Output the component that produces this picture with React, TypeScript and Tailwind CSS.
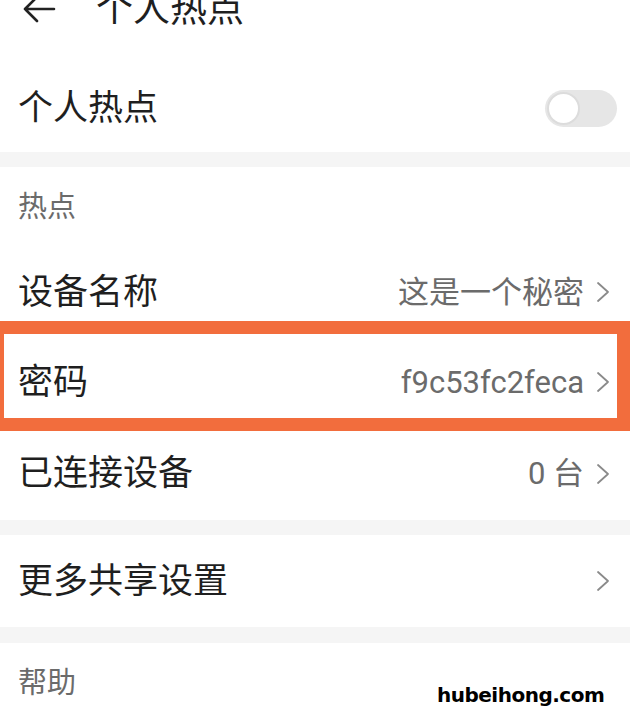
import React from 'react';

const Chevron = () => (
  <svg width="14" height="22" viewBox="0 0 14 22" className="ml-[12px] shrink-0">
    <path d="M2 2 L12 11 L2 20" fill="none" stroke="#8a8a8a" strokeWidth="1.8" strokeLinecap="round" strokeLinejoin="round" />
  </svg>
);

const Row = ({ label, value, h }: { label: string; value?: string; h: string }) => (
  <div className={`flex items-center justify-between pl-[18px] pr-[20px] bg-white ${h}`}>
    <span className="text-[35px] text-[#1f1f1f] leading-none">{label}</span>
    <div className="flex items-center">
      {value && <span className="text-[31px] text-[#6b6b6b] leading-none">{value}</span>}
      <Chevron />
    </div>
  </div>
);

const App: React.FC = () => {
  return (
    <div
      className="relative w-[630px] h-[720px] overflow-hidden bg-white"
      style={{ fontFamily: 'Roboto, "Noto Sans CJK SC", sans-serif' }}
    >
      {/* 标题栏 */}
      <div className="-mt-[46px] h-[110px] flex items-center pl-[22px]">
        <svg width="34" height="30" viewBox="0 0 34 30">
          <path d="M32 15 H3 M15 3 L3 15 L15 27" fill="none" stroke="#222" strokeWidth="2.6" strokeLinecap="round" strokeLinejoin="round" />
        </svg>
        <span className="ml-[40px] text-[37px] text-[#1f1f1f] leading-none">个人热点</span>
      </div>

      {/* 开关 */}
      <div className="h-[88px] flex items-center justify-between pl-[18px] pr-[13px]">
        <span className="text-[35px] text-[#1f1f1f] leading-none">个人热点</span>
        <div className="w-[72px] h-[37px] rounded-full bg-[#e6e6e6] flex items-center px-[2px]">
          <div className="w-[33px] h-[33px] rounded-full bg-white border-[2px] border-[#dcdcdc]" />
        </div>
      </div>

      <div className="h-[15px] bg-[#f5f5f5]" />

      <div className="h-[80px] flex items-center pl-[18px]">
        <span className="text-[29px] text-[#6b6b6b] leading-none">热点</span>
      </div>
      <Row label="设备名称" value="这是一个秘密" h="h-[90px]" />
      <Row label="密码" value="f9c53fc2feca" h="h-[90px]" />
      <Row label="已连接设备" value="0 台" h="h-[93px]" />

      <div className="h-[15px] bg-[#f5f5f5]" />
      <Row label="更多共享设置" h="h-[92px]" />
      <div className="h-[16px] bg-[#f5f5f5]" />

      <div className="h-[80px] flex items-center pl-[18px]">
        <span className="text-[29px] text-[#6b6b6b] leading-none">帮助</span>
      </div>

      {/* 标注框 */}
      <div className="absolute left-[-9px] top-[321px] w-[639px] h-[110px] border-[13px] border-[#f26d3d]" />

      {/* 水印 */}
      <div
        className="absolute left-[437px] top-[685px] text-[20px] font-bold tracking-tight text-black leading-none"
        style={{ fontFamily: '"DejaVu Sans", sans-serif' }}
      >
        hubeihong.com
      </div>
    </div>
  );
};

export default App;
